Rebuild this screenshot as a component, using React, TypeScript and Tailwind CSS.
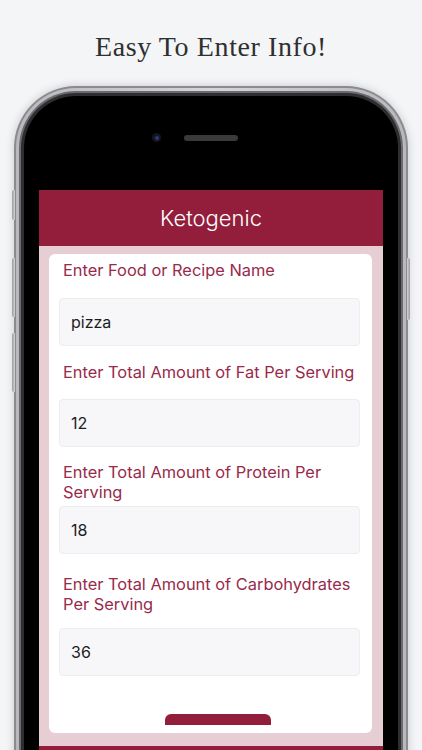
import React from "react";

const sans = { fontFamily: "Inter, 'Liberation Sans', sans-serif" };

function Field({
  label,
  value,
  labelClass,
  inputClass,
}: {
  label: React.ReactNode;
  value: string;
  labelClass: string;
  inputClass: string;
}) {
  return (
    <>
      <div className={`shrink-0 pl-[4px] text-[16.4px] leading-[20px] text-[#982a4a] ${labelClass}`}>{label}</div>
      <div
        className={`flex h-[48px] shrink-0 items-center rounded-[4px] border border-[#ededf0] bg-[#f7f6f9] pl-[11px] text-[16px] text-[#1c1c1e] ${inputClass}`}
      >
        {value}
      </div>
    </>
  );
}

function SideButton({ side, top, h }: { side: "l" | "r"; top: string; h: string }) {
  return (
    <div
      className={`absolute w-[3px] ${top} ${h} ${
        side === "l"
          ? "left-[-2px] rounded-l-[2px] bg-gradient-to-r from-[#9a9a9f] to-[#d4d4d8]"
          : "right-[-2px] rounded-r-[2px] bg-gradient-to-l from-[#9a9a9f] to-[#d4d4d8]"
      }`}
    />
  );
}

export default function App() {
  return (
    <div className="h-[750px] w-[422px] overflow-hidden bg-[#f4f5f7]">
      <div
        className="pt-[29px] text-center text-[28px] leading-[36px] tracking-[0.6px] text-[#2f2f2f]"
        style={{ fontFamily: "'Liberation Serif', 'DejaVu Serif', serif" }}
      >
        Easy To Enter Info!
      </div>

      <div className="relative mx-[14px] mt-[21px]">
        <SideButton side="l" top="top-[104px]" h="h-[30px]" />
        <SideButton side="l" top="top-[172px]" h="h-[59px]" />
        <SideButton side="l" top="top-[247px]" h="h-[59px]" />
        <SideButton side="r" top="top-[172px]" h="h-[62px]" />

        <div className="rounded-t-[62px] bg-[#8a8a8f] px-[2px] pt-[2px] shadow-[0_0_10px_rgba(0,0,0,0.18)]">
          <div className="rounded-t-[60px] bg-gradient-to-r from-[#b8b8bd] via-[#d6d6da] to-[#b8b8bd] px-[3px] pt-[3px]">
            <div className="rounded-t-[57px] bg-[#6a6a6f] px-[2px] pt-[2px]">
              <div className="rounded-t-[55px] bg-[#2e2e30] px-[3px] pt-[3px]">
                <div className="flex flex-col rounded-t-[52px] bg-black px-[15px] pt-[37px]">
                  {/* camera and speaker */}
                  <div className="flex h-[9px] items-center gap-[23px] pl-[113px]">
                    <div className="flex h-[9px] w-[9px] items-center justify-center rounded-full bg-[#15151c]">
                      <div className="h-[4px] w-[4px] rounded-full bg-[#2a3a7a]" />
                    </div>
                    <div className="h-[6px] w-[54px] rounded-full bg-[#3a3a3c]" />
                  </div>

                  {/* screen */}
                  <div className="mt-[48px] bg-[#e6ced4]" style={sans}>
                    <div className="flex h-[56px] items-center justify-center bg-[#931e3b] text-[22px] font-light text-white">
                      Ketogenic
                    </div>
                    <div className="pl-[10px] pr-[11px] pt-[8px]">
                      <div className="h-[479px] rounded-[6px] bg-white pb-[8px]">
                        <div className="flex h-full flex-col overflow-hidden pl-[10px] pr-[12px] pt-[6px]">
                          <Field label="Enter Food or Recipe Name" value="pizza" labelClass="" inputClass="mt-[18px]" />
                          <Field
                            label="Enter Total Amount of Fat Per Serving"
                            value="12"
                            labelClass="mt-[16px]"
                            inputClass="mt-[17px]"
                          />
                          <Field
                            label={
                              <>
                                Enter Total Amount of Protein Per
                                <br />
                                Serving
                              </>
                            }
                            value="18"
                            labelClass="mt-[15px]"
                            inputClass="mt-[4px]"
                          />
                          <Field
                            label={
                              <>
                                Enter Total Amount of Carbohydrates
                                <br />
                                Per Serving
                              </>
                            }
                            value="36"
                            labelClass="mt-[20px]"
                            inputClass="mt-[14px]"
                          />
                          <div className="ml-[106px] mt-[38px] h-[44px] w-[106px] shrink-0 rounded-[6px] bg-[#931e3b]" />
                        </div>
                      </div>
                    </div>
                    <div className="mt-[13px] h-[40px] bg-[#931e3b]" />
                  </div>
                </div>
              </div>
            </div>
          </div>
        </div>
      </div>
    </div>
  );
}
